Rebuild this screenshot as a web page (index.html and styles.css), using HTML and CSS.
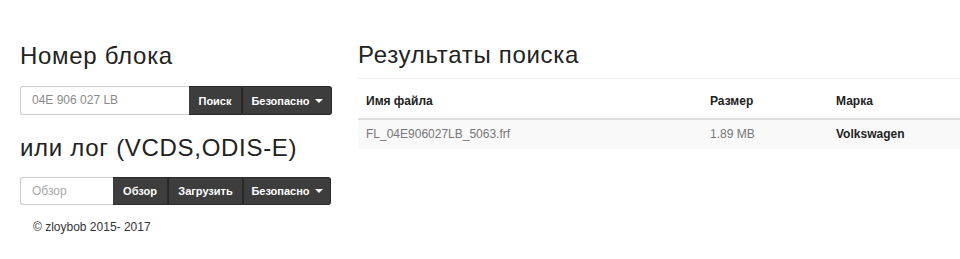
FILE: index.html
```html
<!DOCTYPE html>
<html lang="ru">
<head>
<meta charset="utf-8">
<title>Поиск прошивки</title>
<link rel="stylesheet" href="styles.css">
</head>
<body>
<div class="page">
  <div class="left">
    <h1 class="title t1">Номер блока</h1>
    <div class="group g1">
      <div class="field f1">04E 906 027 LB</div>
      <button class="btn b-search">Поиск</button>
      <button class="btn last b-safe1">Безопасно<span class="caret"></span></button>
    </div>
    <h1 class="title t2">или лог (VCDS,ODIS-E)</h1>
    <div class="group g2">
      <div class="field f2">Обзор</div>
      <button class="btn b-browse">Обзор</button>
      <button class="btn b-upload">Загрузить</button>
      <button class="btn last b-safe2">Безопасно<span class="caret"></span></button>
    </div>
    <p class="footer">© zloybob 2015- 2017</p>
  </div>
  <div class="right">
    <h1 class="title results">Результаты поиска</h1>
    <table class="table">
      <thead>
        <tr><th class="c1">Имя файла</th><th class="c2">Размер</th><th class="c3">Марка</th></tr>
      </thead>
      <tbody>
        <tr><td class="muted">FL_04E906027LB_5063.frf</td><td class="muted">1.89 MB</td><td class="brand">Volkswagen</td></tr>
      </tbody>
    </table>
  </div>
</div>
</body>
</html>
```
FILE: styles.css
```css
html, body {
  margin: 0;
  padding: 0;
  background: #fff;
}
body {
  font-family: "Liberation Sans", Arial, sans-serif;
  font-size: 12px;
  line-height: 17px;
  color: #333;
}
.page {
  display: flex;
  width: 960px;
  height: 259px;
  overflow: hidden;
}
.left {
  flex: 0 0 312px;
  min-width: 0;
  margin-left: 20px;
  padding-top: 43px;
}
.right {
  margin-left: 26px;
  flex: 1;
  min-width: 0;
  padding-top: 42px;
}
.title {
  margin: 0;
  font-weight: normal;
  font-size: 24px;
  letter-spacing: 0.7px;
  line-height: 26px;
  color: #222;
  white-space: nowrap;
}
.group {
  display: flex;
  align-items: stretch;
}
.group > * {
  flex-shrink: 0;
}
.g1 {
  margin-top: 17px;
  height: 29px;
}
.t2 {
  margin-top: 20px;
}
.g2 {
  margin-top: 16px;
  height: 28px;
}
.field {
  box-sizing: border-box;
  border: 1px solid #ccc;
  border-right: none;
  border-radius: 3px 0 0 3px;
  padding-left: 11px;
  display: flex;
  align-items: center;
  color: #8a8a8a;
  font-size: 12px;
}
.f1 { width: 169px; }
.f2 { width: 93px; color: #a8a8a8; }
.btn {
  box-sizing: border-box;
  font-family: "Liberation Sans", Arial, sans-serif;
  font-size: 11px;
  font-weight: bold;
  color: #fff;
  background: #3d3d3d;
  border: 1px solid #2a2a2a;
  border-left: none;
  margin: 0;
  padding: 0;
  display: flex;
  align-items: center;
  justify-content: center;
  cursor: pointer;
}
.btn + .btn {
  border-left: 1px solid #262626;
}
.btn.last {
  border-radius: 0 3px 3px 0;
}
.b-search { width: 53px; }
.b-safe1 { width: 90px; }
.b-browse { width: 55px; }
.b-upload { width: 75px; }
.b-safe2 { width: 88px; }
.caret {
  display: inline-block;
  width: 0;
  height: 0;
  margin-left: 5px;
  border-top: 4px solid #fff;
  border-left: 4px solid transparent;
  border-right: 4px solid transparent;
}
.footer {
  margin: 14px 0 0 13px;
}
.results {
  padding-bottom: 10px;
  border-bottom: 1px solid #eee;
}
.table {
  margin-top: 6px;
  width: 100%;
  border-collapse: collapse;
  table-layout: fixed;
}
.table th {
  text-align: left;
  font-weight: bold;
  color: #222;
  padding: 8px 8px;
  border-bottom: 2px solid #ddd;
}
.table td {
  padding: 6px 8px;
  background: #f9f9f9;
}
.c1 { width: 328px; }
.c2 { width: 110px; }
.muted { color: #777; }
.brand { font-weight: bold; color: #222; }
```
